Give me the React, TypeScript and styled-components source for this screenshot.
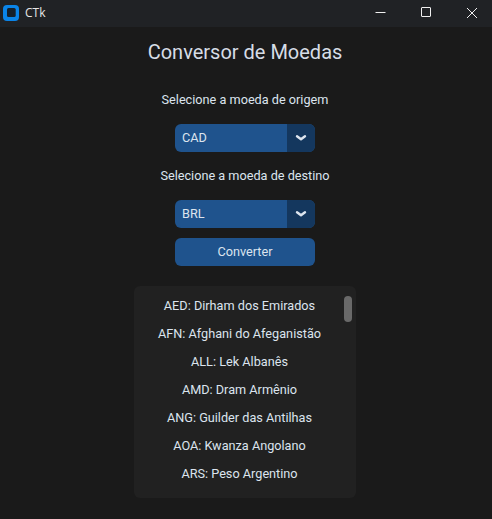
import React from 'react';
import styled, { createGlobalStyle } from 'styled-components';

const GlobalStyle = createGlobalStyle`
  html, body {
    margin: 0;
    padding: 0;
    width: 492px;
    height: 519px;
    overflow: hidden;
    background: #1a1a1a;
  }
`;

const Window = styled.div`
  width: 492px;
  height: 519px;
  display: flex;
  flex-direction: column;
  overflow: hidden;
  background: #1a1a1a;
  color: #dce4ee;
  font-family: Roboto, sans-serif;
  font-size: 12.7px;
`;

const TitleBar = styled.div`
  height: 27px;
  flex: none;
  box-sizing: border-box;
  display: flex;
  align-items: center;
  background: #202225;
  padding: 0 0 2px 3px;
`;

const TitleText = styled.span`
  margin-left: 6px;
  font-family: 'Open Sans', sans-serif;
  font-size: 12px;
  color: #e6e6e6;
`;

const WindowButtons = styled.div`
  margin-left: auto;
  margin-right: -3px;
  display: flex;
  height: 100%;
`;

const WindowButton = styled.div`
  width: 46px;
  display: flex;
  align-items: center;
  justify-content: center;
`;

const Content = styled.div`
  flex: 1;
  width: 490px;
  display: flex;
  flex-direction: column;
  align-items: center;
`;

const Heading = styled.h1`
  margin: 12px 0 0;
  height: 26px;
  line-height: 26px;
  font-size: 20px;
  font-weight: 400;
  color: #d6dde6;
`;

const FieldLabel = styled.div<{ $top: number }>`
  margin-top: ${p => p.$top}px;
  height: 20px;
  line-height: 20px;
  white-space: nowrap;
`;

const Dropdown = styled.div`
  margin-top: 14px;
  width: 140px;
  height: 28px;
  display: flex;
  border-radius: 6px;
  overflow: hidden;
  background: #1f538d;
`;

const DropdownValue = styled.div`
  flex: 1;
  padding-left: 7px;
  line-height: 28px;
`;

const DropdownArrow = styled.div`
  width: 28px;
  display: flex;
  align-items: center;
  justify-content: center;
  background: #14375e;
`;

const ConvertButton = styled.button`
  margin-top: 10px;
  width: 140px;
  height: 28px;
  padding: 0 0 2px;
  border: none;
  border-radius: 6px;
  background: #1f538d;
  color: #dce4ee;
  font: inherit;
`;

const ListFrame = styled.div`
  position: relative;
  margin-top: 20px;
  width: 222px;
  height: 212px;
  padding: 6px 11px 0 0;
  box-sizing: border-box;
  border-radius: 6px;
  background: #212121;
`;

const ListItem = styled.div`
  height: 28px;
  line-height: 28px;
  text-align: center;
`;

const ScrollThumb = styled.div`
  position: absolute;
  top: 10px;
  right: 4px;
  width: 8px;
  height: 26px;
  border-radius: 4px;
  background: #696969;
`;

const currencies = [
  'AED: Dirham dos Emirados',
  'AFN: Afghani do Afeganistão',
  'ALL: Lek Albanês',
  'AMD: Dram Armênio',
  'ANG: Guilder das Antilhas',
  'AOA: Kwanza Angolano',
  'ARS: Peso Argentino',
];

const AppIcon = () => (
  <svg width="16" height="16" viewBox="0 0 16 16">
    <rect x="0" y="0" width="16" height="16" rx="4" fill="#0a84e8" />
    <rect x="4" y="3" width="8.7" height="9" rx="1.5" fill="#15202b" />
  </svg>
);

const Arrow = () => (
  <svg width="12" height="8" viewBox="0 0 12 8">
    <path d="M2 2.2 L6 5.2 L10 2.2" fill="none" stroke="#dce4ee" strokeWidth="2.4" strokeLinecap="round" strokeLinejoin="round" />
  </svg>
);

const App: React.FC = () => (
  <Window>
    <GlobalStyle />
    <TitleBar>
      <AppIcon />
      <TitleText>CTk</TitleText>
      <WindowButtons>
        <WindowButton>
          <svg width="11" height="11" viewBox="0 0 11 11">
            <path d="M0.5 5.5 H10.5" stroke="#f0f0f0" strokeWidth="1" fill="none" />
          </svg>
        </WindowButton>
        <WindowButton>
          <svg width="11" height="11" viewBox="0 0 11 11">
            <rect x="0.5" y="0.5" width="9" height="9" rx="0.5" stroke="#f0f0f0" strokeWidth="1" fill="none" />
          </svg>
        </WindowButton>
        <WindowButton>
          <svg width="12" height="12" viewBox="0 0 12 12">
            <path d="M1 1 L11 11 M11 1 L1 11" stroke="#f0f0f0" strokeWidth="1" fill="none" />
          </svg>
        </WindowButton>
      </WindowButtons>
    </TitleBar>
    <Content>
      <Heading>Conversor de Moedas</Heading>
      <FieldLabel $top={25}>Selecione a moeda de origem</FieldLabel>
      <Dropdown>
        <DropdownValue>CAD</DropdownValue>
        <DropdownArrow><Arrow /></DropdownArrow>
      </Dropdown>
      <FieldLabel $top={14}>Selecione a moeda de destino</FieldLabel>
      <Dropdown>
        <DropdownValue>BRL</DropdownValue>
        <DropdownArrow><Arrow /></DropdownArrow>
      </Dropdown>
      <ConvertButton>Converter</ConvertButton>
      <ListFrame>
        {currencies.map(c => (
          <ListItem key={c}>{c}</ListItem>
        ))}
        <ScrollThumb />
      </ListFrame>
    </Content>
  </Window>
);

export default App;
